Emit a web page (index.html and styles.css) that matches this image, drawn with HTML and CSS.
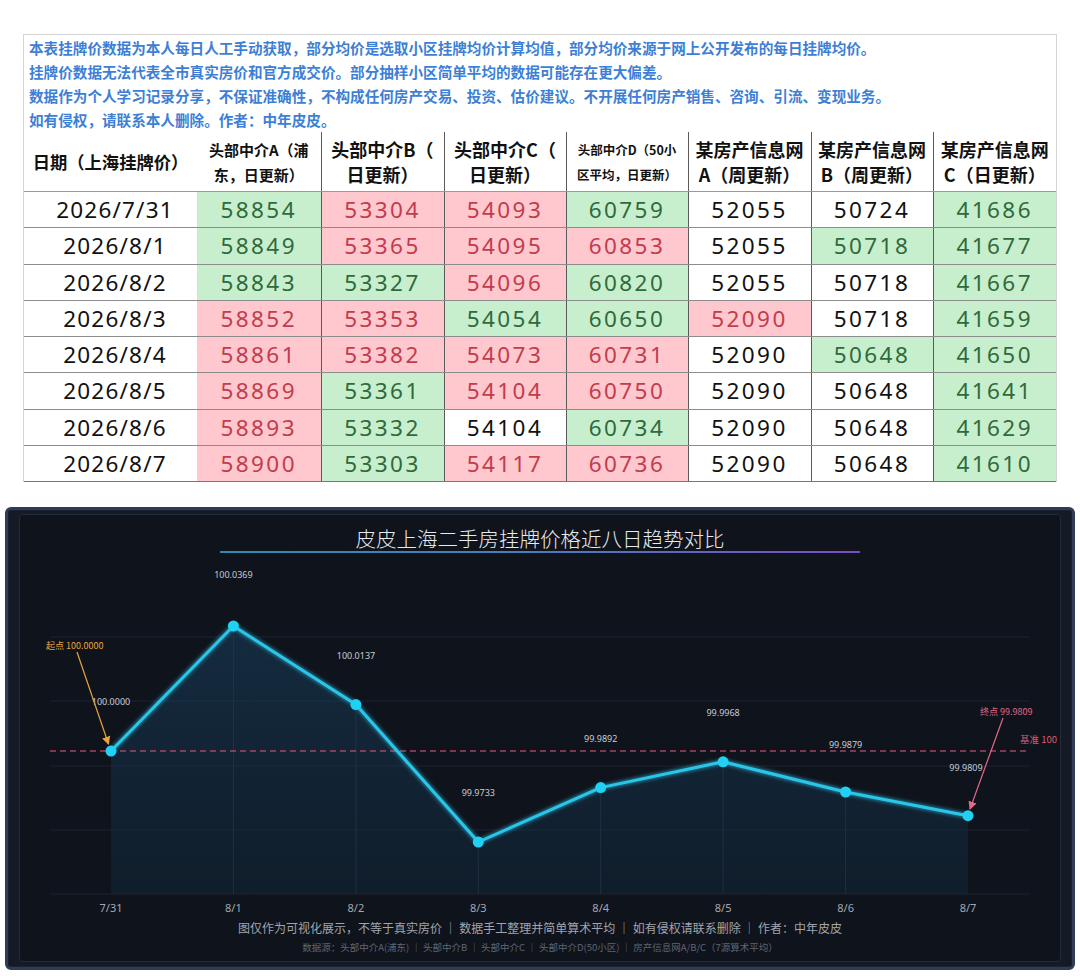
FILE: index.html
```html
<!DOCTYPE html>
<html lang="zh-CN">
<head>
<meta charset="utf-8">
<title>上海二手房挂牌价</title>
<link rel="stylesheet" href="styles.css">
</head>
<body>
<div class="sheet">
  <div class="notes">
    <p>本表挂牌价数据为本人每日人工手动获取，部分均价是选取小区挂牌均价计算均值，部分均价来源于网上公开发布的每日挂牌均价。</p>
    <p>挂牌价数据无法代表全市真实房价和官方成交价。部分抽样小区简单平均的数据可能存在更大偏差。</p>
    <p>数据作为个人学习记录分享，不保证准确性，不构成任何房产交易、投资、估价建议。不开展任何房产销售、咨询、引流、变现业务。</p>
    <p>如有侵权，请联系本人删除。作者：中年皮皮。</p>
  </div>
  <table class="prices">
    <colgroup>
      <col class="c-date"><col class="c-a"><col class="c-b"><col class="c-c"><col class="c-d"><col class="c-e"><col class="c-f"><col class="c-g">
    </colgroup>
    <thead>
      <tr>
        <th class="h-date">日期（上海挂牌价）</th>
        <th class="h-sm">头部中介A（浦<br>东，日更新）</th>
        <th class="h-lg">头部中介B（<br>日更新）</th>
        <th class="h-lg">头部中介C（<br>日更新）</th>
        <th class="h-xs">头部中介D（50小<br>区平均，日更新）</th>
        <th class="h-lg">某房产信息网<br>A（周更新）</th>
        <th class="h-lg">某房产信息网<br>B（周更新）</th>
        <th class="h-lg">某房产信息网<br>C（日更新）</th>
      </tr>
    </thead>
    <tbody>
      <tr><td>2026/7/31</td><td class="g">58854</td><td class="r">53304</td><td class="r">54093</td><td class="g">60759</td><td>52055</td><td>50724</td><td class="g">41686</td></tr>
      <tr><td>2026/8/1</td><td class="g">58849</td><td class="r">53365</td><td class="r">54095</td><td class="r">60853</td><td>52055</td><td class="g">50718</td><td class="g">41677</td></tr>
      <tr><td>2026/8/2</td><td class="g">58843</td><td class="g">53327</td><td class="r">54096</td><td class="g">60820</td><td>52055</td><td>50718</td><td class="g">41667</td></tr>
      <tr><td>2026/8/3</td><td class="r">58852</td><td class="r">53353</td><td class="g">54054</td><td class="g">60650</td><td class="r">52090</td><td>50718</td><td class="g">41659</td></tr>
      <tr><td>2026/8/4</td><td class="r">58861</td><td class="r">53382</td><td class="r">54073</td><td class="r">60731</td><td>52090</td><td class="g">50648</td><td class="g">41650</td></tr>
      <tr><td>2026/8/5</td><td class="r">58869</td><td class="g">53361</td><td class="r">54104</td><td class="r">60750</td><td>52090</td><td>50648</td><td class="g">41641</td></tr>
      <tr><td>2026/8/6</td><td class="r">58893</td><td class="g">53332</td><td>54104</td><td class="g">60734</td><td>52090</td><td>50648</td><td class="g">41629</td></tr>
      <tr><td>2026/8/7</td><td class="r">58900</td><td class="g">53303</td><td class="r">54117</td><td class="r">60736</td><td>52090</td><td>50648</td><td class="g">41610</td></tr>
    </tbody>
  </table>
</div>

<div class="chart">
  <div class="frame">
    <div class="chart-title">皮皮上海二手房挂牌价格近八日趋势对比</div>
    <div class="title-rule"></div>
    <svg class="plot" width="1040" height="365" viewBox="20 553 1040 365" xmlns="http://www.w3.org/2000/svg">
      <defs>
        <linearGradient id="areaFill" x1="0" y1="0" x2="0" y2="1">
          <stop offset="0" stop-color="#1a4a6a" stop-opacity="0.45"/>
          <stop offset="1" stop-color="#123048" stop-opacity="0.35"/>
        </linearGradient>
        <filter id="glow" x="-5%" y="-20%" width="110%" height="140%">
          <feGaussianBlur stdDeviation="2.2" result="b"/>
          <feMerge><feMergeNode in="b"/><feMergeNode in="SourceGraphic"/></feMerge>
        </filter>
        <marker id="arrOrange" viewBox="0 0 8 8" refX="7" refY="4" markerWidth="7" markerHeight="7" orient="auto">
          <path d="M0,0 L8,4 L0,8 z" fill="#e8a33e"/>
        </marker>
        <marker id="arrPink" viewBox="0 0 8 8" refX="7" refY="4" markerWidth="7" markerHeight="7" orient="auto">
          <path d="M0,0 L8,4 L0,8 z" fill="#e06a88"/>
        </marker>
      </defs>

      <g class="grid">
        <line x1="50" y1="637" x2="1030" y2="637"/>
        <line x1="50" y1="701" x2="1030" y2="701"/>
        <line x1="50" y1="766" x2="1030" y2="766"/>
        <line x1="50" y1="830" x2="1030" y2="830"/>
        <line x1="50" y1="894" x2="1030" y2="894"/>
      </g>

      <polygon class="area" points="111,751 233.4,626 355.9,704.6 478.3,842 600.7,787.6 723.1,761.8 845.6,792 968,815.7 968,894 111,894"/>

      <g class="drops">
        <line x1="233.4" y1="626" x2="233.4" y2="894"/>
        <line x1="355.9" y1="705" x2="355.9" y2="894"/>
        <line x1="478.3" y1="842" x2="478.3" y2="894"/>
        <line x1="600.7" y1="788" x2="600.7" y2="894"/>
        <line x1="723.1" y1="762" x2="723.1" y2="894"/>
        <line x1="845.6" y1="792" x2="845.6" y2="894"/>
      </g>

      <line class="baseline" x1="50" y1="751" x2="1030" y2="751"/>

      <polyline class="trend" filter="url(#glow)" points="111,751 233.4,626 355.9,704.6 478.3,842 600.7,787.6 723.1,761.8 845.6,792 968,815.7"/>

      <g class="dots">
        <circle cx="111" cy="751" r="5.5"/>
        <circle cx="233.4" cy="626" r="5.5"/>
        <circle cx="355.9" cy="704.6" r="5.5"/>
        <circle cx="478.3" cy="842" r="5.5"/>
        <circle cx="600.7" cy="787.6" r="5.5"/>
        <circle cx="723.1" cy="761.8" r="5.5"/>
        <circle cx="845.6" cy="792" r="5.5"/>
        <circle cx="968" cy="815.7" r="5.5"/>
      </g>

      <g class="vals">
        <text x="111" y="705">100.0000</text>
        <text x="233.4" y="578">100.0369</text>
        <text x="356" y="659">100.0137</text>
        <text x="478.3" y="796">99.9733</text>
        <text x="600.7" y="742">99.9892</text>
        <text x="723.1" y="716">99.9968</text>
        <text x="845.6" y="748">99.9879</text>
        <text x="966" y="771">99.9809</text>
      </g>

      <line class="ann-start" x1="77" y1="652" x2="108.5" y2="744" marker-end="url(#arrOrange)"/>
      <text class="lbl-start" x="46" y="649">起点 100.0000</text>

      <line class="ann-end" x1="1003" y1="718" x2="970" y2="809" marker-end="url(#arrPink)"/>
      <text class="lbl-end" x="980" y="715">终点 99.9809</text>

      <text class="lbl-base" x="1020" y="743">基准 100</text>

      <g class="xlabels">
        <text x="111" y="912">7/31</text>
        <text x="233.4" y="912">8/1</text>
        <text x="355.9" y="912">8/2</text>
        <text x="478.3" y="912">8/3</text>
        <text x="600.7" y="912">8/4</text>
        <text x="723.1" y="912">8/5</text>
        <text x="845.6" y="912">8/6</text>
        <text x="968" y="912">8/7</text>
      </g>
    </svg>
    <div class="chart-foot">图仅作为可视化展示，不等于真实房价 ｜ 数据手工整理并简单算术平均 ｜ 如有侵权请联系删除 ｜ 作者：中年皮皮</div>
    <div class="chart-src">数据源：头部中介A(浦东) ｜ 头部中介B ｜ 头部中介C ｜ 头部中介D(50小区) ｜ 房产信息网A/B/C（7源算术平均）</div>
  </div>
</div>
</body>
</html>
```

FILE: styles.css
```css
html, body {
  margin: 0;
  padding: 0;
}

body {
  width: 1080px;
  height: 976px;
  overflow: hidden;
  background: #ffffff;
  font-family: "Noto Sans", "Noto Sans CJK SC", sans-serif;
}

/* ---------- top sheet ---------- */
.sheet {
  margin: 34px 23px 0 23px;
  border: 1px solid #d4d4d4;
  border-bottom: 0;
}

.notes {
  padding: 1px 4px 0 5px;
}

.notes p {
  margin: 0;
  font-family: "Noto Sans CJK SC", sans-serif;
  font-weight: 700;
  font-size: 14.6px;
  line-height: 24px;
  color: #3d7fd6;
  white-space: nowrap;
}

.prices {
  width: 1032px;
  table-layout: fixed;
  border-collapse: collapse;
}

.c-date { width: 173px; }
.c-a { width: 124px; }
.c-b { width: 123px; }
.c-c { width: 122px; }
.c-d { width: 122px; }
.c-e { width: 123px; }
.c-f { width: 122px; }
.c-g { width: 123px; }

.prices th {
  height: 59px;
  padding: 0 2px;
  font-family: "Noto Sans CJK SC", sans-serif;
  font-weight: 700;
  color: #111;
  line-height: 25px;
  text-align: center;
  vertical-align: middle;
  white-space: nowrap;
  border-right: 1px solid #5a5a5a;
  border-bottom: 1px solid #9a9a9a;
}

.prices th:first-child,
.prices td:first-child {
  border-right: 0;
}

.prices th:last-child,
.prices td:last-child {
  border-right: 0;
}

.h-date { font-size: 17.3px; }
.h-lg { font-size: 18px; }
.h-sm { font-size: 15px; }
.h-xs { font-size: 12.5px; line-height: 24px; }

.prices td {
  height: 35.25px;
  padding: 0;
  font-family: "Noto Sans", sans-serif;
  font-size: 22.5px;
  letter-spacing: 2.4px;
  line-height: 35px;
  color: #111;
  text-align: center;
  border-right: 1px solid #5a5a5a;
  border-bottom: 1px solid #8c8c8c;
}

.prices td:first-child {
  padding-left: 9px;
  letter-spacing: 1.2px;
}

.prices tbody tr:last-child td {
  border-bottom: 1px solid #777;
}

.prices td.g {
  background: #c8efcd;
  color: #2f6a3c;
}

.prices td.r {
  background: #ffc8ce;
  color: #c23c4d;
}

/* ---------- chart panel ---------- */
.chart {
  margin: 25px 5px 0 5px;
  height: 463px;
  box-sizing: border-box;
  padding: 4px 11px 5px 11px;
  background: #141a26;
  border: 3px solid #2f3c53;
  border-radius: 6px;
  box-shadow: inset 0 0 0 1px #1b2333;
}

.frame {
  height: 448px;
  box-sizing: border-box;
  border: 1px solid #222b3b;
  border-radius: 4px;
  background: #0f131c;
}

.chart-title {
  padding-top: 10px;
  font-family: "Noto Sans CJK SC", sans-serif;
  font-size: 20.5px;
  line-height: 26px;
  font-weight: 300;
  color: #e8eaee;
  text-align: center;
}

.title-rule {
  width: 640px;
  height: 2px;
  margin: 0 auto;
  background: linear-gradient(90deg, #2e8db2 0%, #4a7cbc 50%, #7b4bc7 100%);
}

.plot {
  display: block;
}

.grid line {
  stroke: #1c2331;
  stroke-width: 1;
}

.area {
  fill: url(#areaFill);
}

.drops line {
  stroke: #2a4052;
  stroke-opacity: 0.55;
  stroke-width: 1;
}

.baseline {
  stroke: #c04d68;
  stroke-width: 1.6;
  stroke-dasharray: 6 4;
  stroke-opacity: 0.85;
}

.trend {
  fill: none;
  stroke: #2bc6ea;
  stroke-width: 3;
  stroke-linejoin: round;
}

.dots circle {
  fill: #1fd2f3;
}

.vals text {
  font-family: "Noto Sans", sans-serif;
  font-size: 9px;
  fill: #c8ccd4;
  text-anchor: middle;
}

.ann-start {
  stroke: #e8a33e;
  stroke-width: 1.2;
}

.ann-end {
  stroke: #e06a88;
  stroke-width: 1.2;
}

.lbl-start {
  font-family: "Noto Sans CJK SC", sans-serif;
  font-size: 9px;
  fill: #e8a33e;
}

.lbl-end {
  font-family: "Noto Sans CJK SC", sans-serif;
  font-size: 9px;
  fill: #e06a88;
}

.lbl-base {
  font-family: "Noto Sans CJK SC", sans-serif;
  font-size: 9.5px;
  fill: #d95a6e;
}

.xlabels text {
  font-family: "Noto Sans", sans-serif;
  font-size: 11px;
  fill: #a3a8b1;
  text-anchor: middle;
}

.chart-foot {
  height: 20px;
  font-family: "Noto Sans CJK SC", sans-serif;
  font-size: 12px;
  line-height: 20px;
  color: #a0a5ad;
  text-align: center;
  white-space: nowrap;
}

.chart-src {
  height: 18px;
  font-family: "Noto Sans CJK SC", sans-serif;
  font-size: 9.5px;
  line-height: 18px;
  color: #5f6672;
  text-align: center;
  white-space: nowrap;
}
```
